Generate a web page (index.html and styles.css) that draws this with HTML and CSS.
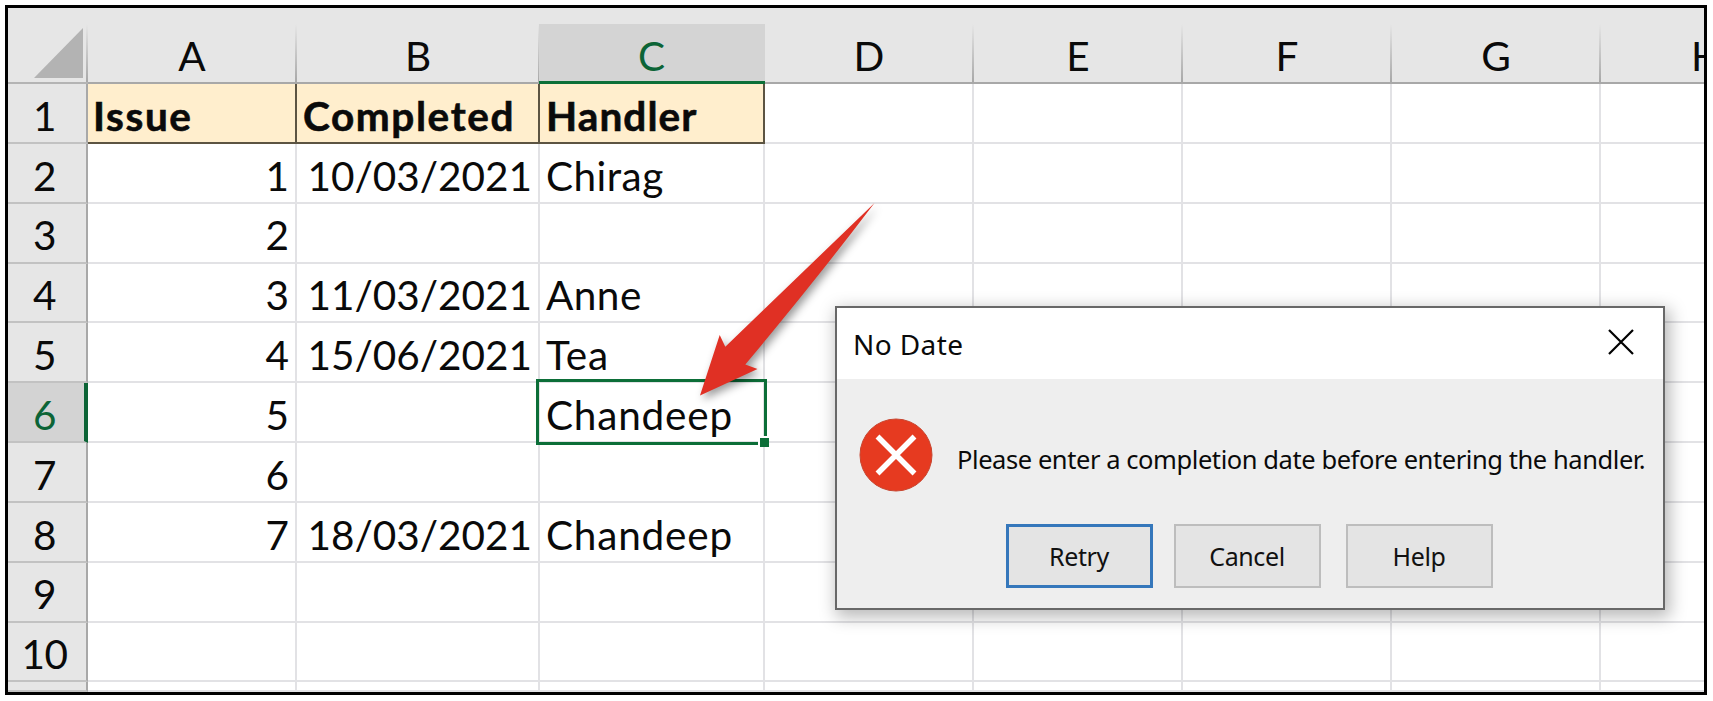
FILE: index.html
```html
<!DOCTYPE html>
<html lang="en">
<head>
<meta charset="utf-8">
<title>Issue log</title>
<link rel="stylesheet" href="styles.css">
</head>
<body>
<main class="frame">
  <div class="sheet">
    <div class="corner"><svg class="corner-mark" viewBox="0 0 49 50"><path d="M49 0V50H0Z"/></svg></div>
    <div class="col">A</div><div class="col">B</div><div class="col selected">C</div><div class="col">D</div><div class="col">E</div><div class="col">F</div><div class="col">G</div><div class="col last">H</div>

    <div class="row">1</div><div class="cell title t-issue">Issue</div><div class="cell title t-completed">Completed</div><div class="cell title t-handler">Handler</div><div class="cell"></div><div class="cell"></div><div class="cell"></div><div class="cell"></div><div class="cell last"></div>
    <div class="row">2</div><div class="cell num">1</div><div class="cell num">10/03/2021</div><div class="cell">Chirag</div><div class="cell"></div><div class="cell"></div><div class="cell"></div><div class="cell"></div><div class="cell last"></div>
    <div class="row">3</div><div class="cell num">2</div><div class="cell"></div><div class="cell"></div><div class="cell"></div><div class="cell"></div><div class="cell"></div><div class="cell"></div><div class="cell last"></div>
    <div class="row">4</div><div class="cell num">3</div><div class="cell num">11/03/2021</div><div class="cell">Anne</div><div class="cell"></div><div class="cell"></div><div class="cell"></div><div class="cell"></div><div class="cell last"></div>
    <div class="row">5</div><div class="cell num">4</div><div class="cell num">15/06/2021</div><div class="cell wide">Tea</div><div class="cell"></div><div class="cell"></div><div class="cell"></div><div class="cell"></div><div class="cell last"></div>
    <div class="row selected">6</div><div class="cell num">5</div><div class="cell"></div><div class="cell wide active">Chandeep<span class="selection"><i class="handle"></i></span></div><div class="cell"></div><div class="cell"></div><div class="cell"></div><div class="cell"></div><div class="cell last"></div>
    <div class="row">7</div><div class="cell num">6</div><div class="cell"></div><div class="cell"></div><div class="cell"></div><div class="cell"></div><div class="cell"></div><div class="cell"></div><div class="cell last"></div>
    <div class="row">8</div><div class="cell num">7</div><div class="cell num">18/03/2021</div><div class="cell wide">Chandeep</div><div class="cell"></div><div class="cell"></div><div class="cell"></div><div class="cell"></div><div class="cell last"></div>
    <div class="row">9</div><div class="cell"></div><div class="cell"></div><div class="cell"></div><div class="cell"></div><div class="cell"></div><div class="cell"></div><div class="cell"></div><div class="cell last"></div>
    <div class="row">10</div><div class="cell"></div><div class="cell"></div><div class="cell"></div><div class="cell"></div><div class="cell"></div><div class="cell"></div><div class="cell"></div><div class="cell last"></div>
    <div class="row"></div><div class="cell"></div><div class="cell"></div><div class="cell"></div><div class="cell"></div><div class="cell"></div><div class="cell"></div><div class="cell"></div><div class="cell last"></div>
  </div>
</main>

<svg class="arrow" viewBox="0 0 200 220"><path d="M184.500 13L35.300 156.700L29.700 145L10 205.500L67.500 179L55.300 174.500Q126 90 184.500 13Z"/></svg>

<section class="dialog">
  <header class="dialog-bar">
    <span class="dialog-title">No Date</span>
    <svg class="close" viewBox="0 0 26 26"><path d="M1 1L25 25M25 1L1 25"/></svg>
  </header>
  <div class="dialog-body">
    <div class="message">
      <svg class="error" viewBox="0 0 74 74"><circle cx="37" cy="37" r="36"/><path d="M18.500 18.500L55.500 55.500M55.500 18.500L18.500 55.500"/></svg>
      <p class="message-text">Please enter a completion date before entering the handler.</p>
    </div>
    <div class="actions">
      <button class="button primary">Retry</button>
      <button class="button">Cancel</button>
      <button class="button help">Help</button>
    </div>
  </div>
</section>
</body>
</html>
```
FILE: styles.css
```css
* { box-sizing: border-box; }
body {
  margin: 0;
  padding: 5px;
  width: 1713px;
  height: 701px;
  overflow: hidden;
  background: #fff;
  color: #0a0a0a;
  font-family: Lato, "Liberation Sans", sans-serif;
  position: relative;
}
.frame {
  width: 1702px;
  height: 690px;
  border: 3px solid #000;
  overflow: hidden;
}
.sheet {
  display: grid;
  width: 1802px;
  height: 684px;
  grid-template-columns: 80px 209px 243px 225px 209px 209px 209px 209px 209px;
  grid-template-rows: 76px repeat(10, 59.85px) 1fr;
  font-size: 40.5px;
  line-height: 1;
}
.corner, .col, .row { background: #e6e6e6; }
.corner {
  display: flex;
  justify-content: flex-end;
  align-items: flex-end;
  padding: 0 5px 4px 0;
  border-bottom: 2px solid #b4b4b4;
  background: linear-gradient(#e6e6e6 16px, #a8a8a8) right / 2px 100% no-repeat #e6e6e6;
}
.corner-mark { width: 49px; height: 50px; fill: #b3b3b3; }
.col {
  display: flex;
  justify-content: center;
  align-items: flex-end;
  padding: 0 1px 6px 0;
  border-bottom: 2px solid #a8a8a8;
  background: linear-gradient(#e6e6e6 16px, #a8a8a8) right / 2px 100% no-repeat #e6e6e6;
}
.col.last { background: #e6e6e6; padding-left: 3px; }
.col.selected {
  color: #0c6436;
  border-bottom: 3px solid #0c7038;
  padding-bottom: 5px;
  margin-left: -1px;
  background: linear-gradient(#e6e6e6 16px, #d4d4d4 16px);
}
.row {
  display: flex;
  justify-content: center;
  align-items: center;
  padding: 6px 5px 0 0;
  border-right: 2px solid #a8a8a8;
  border-bottom: 2px solid #c2c2c2;
  letter-spacing: -0.5px;
}
.row.selected { background: #d3d3d3; color: #0c6436; border-right: 4px solid #0c6436; padding-right: 3px; }
.cell {
  display: flex;
  align-items: center;
  padding: 6px 6px 0 6px;
  border-right: 2px solid #e2e2e5;
  border-bottom: 2px solid #e2e2e5;
  letter-spacing: 0.45px;
  white-space: nowrap;
}
.cell.num { justify-content: flex-end; letter-spacing: 0; }
.cell.wide { letter-spacing: 0.8px; }
.cell.title {
  font-weight: 700;
  -webkit-text-stroke: 0.6px #0a0a0a;
  background: #ffeecd;
  border-color: #5c5442;
}
.cell.t-issue { letter-spacing: 1.6px; padding-left: 5px; }
.cell.t-completed { letter-spacing: 1.6px; }
.cell.t-handler { letter-spacing: 1.1px; }
.cell.last { border-right: 0; }
.cell.active { position: relative; }
.selection {
  position: absolute;
  inset: -4px -4px -4px -4px;
  border: 3px solid #0c6e38;
}
.handle {
  position: absolute;
  right: -5px;
  bottom: -5px;
  width: 11px;
  height: 11px;
  background: #0c6e38;
  border-top: 2px solid #fff;
  border-left: 2px solid #fff;
}
.arrow {
  position: absolute;
  left: 690px;
  top: 190px;
  width: 200px;
  height: 220px;
  fill: #e03024;
  overflow: visible;
  filter: drop-shadow(3px 4px 4px rgba(0, 0, 0, .4));
}
.dialog {
  position: absolute;
  left: 835px;
  top: 306px;
  width: 830px;
  height: 304px;
  display: flex;
  flex-direction: column;
  border: 2px solid #686868;
  background: #eee;
  box-shadow: 3px 5px 16px 2px rgba(0, 0, 0, .28);
  font-family: "Noto Sans", "Open Sans", sans-serif;
}
.dialog-bar {
  height: 71px;
  display: flex;
  justify-content: space-between;
  align-items: center;
  padding: 0 29px 0 16px;
  background: #fff;
}
.dialog-title { font-size: 28px; line-height: 1; letter-spacing: 0.4px; margin-top: 0; }
.close { width: 26px; height: 26px; margin-bottom: 3px; fill: none; stroke: #000; stroke-width: 2.2; }
.dialog-body { flex: 1; display: flex; flex-direction: column; }
.message { display: flex; align-items: center; height: 74px; margin: 39px 0 0 22px; }
.error { width: 74px; height: 74px; }
.error circle { fill: #e63a20; stroke: #c8452f; stroke-width: 1; }
.error path { stroke: #fff; stroke-width: 5.5; }
.message-text { margin: 10px 0 0 24px; font-size: 25.5px; line-height: 1; letter-spacing: -0.43px; white-space: nowrap; }
.actions { display: flex; gap: 21px; margin: 32px 0 0 169px; }
.button {
  width: 147px;
  height: 64px;
  padding: 1px 1px 0 0;
  border: 2px solid #bdbdbd;
  background: #e4e4e4;
  color: #111;
  font: 25px/1 "Noto Sans", "Open Sans", sans-serif;
  letter-spacing: -0.4px;
}
.button.primary { border: 3px solid #3577bb; }
.button.help { margin-left: 4px; }
```
